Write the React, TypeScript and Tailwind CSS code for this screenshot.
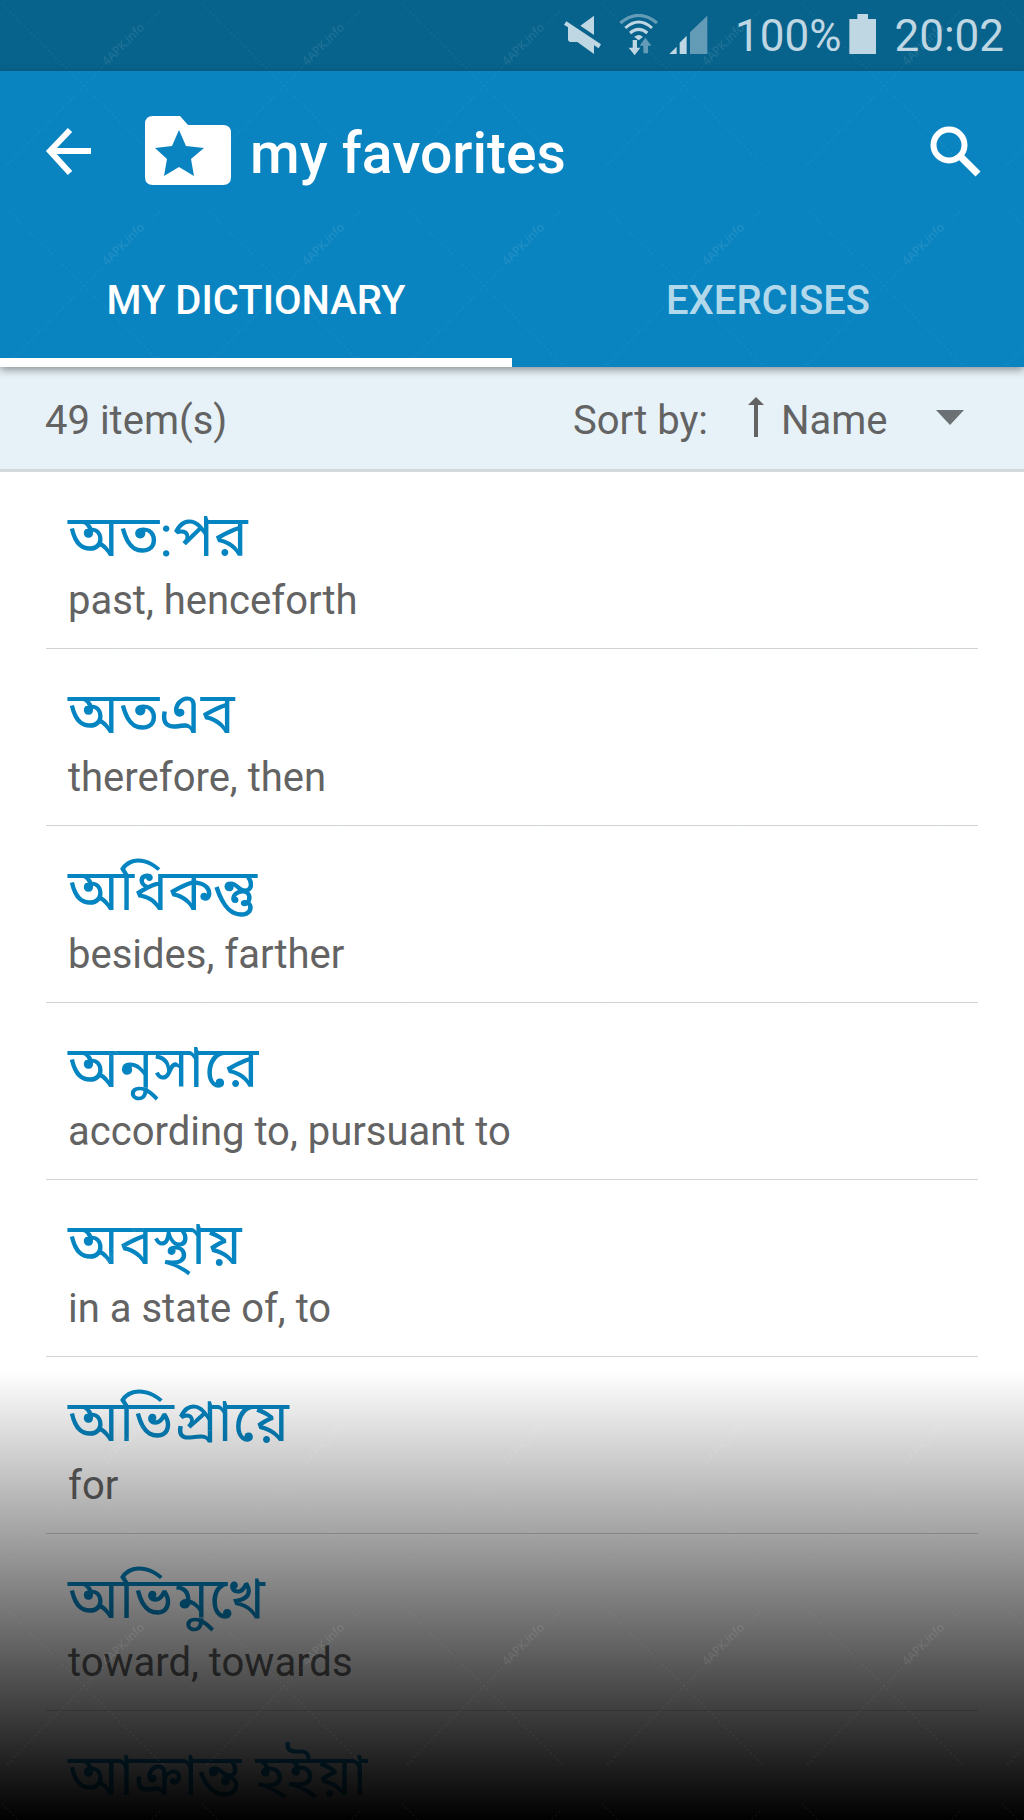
import React, { useState } from 'react'

const words = [
  { id: 1, word: 'অত:পর', translation: 'past, henceforth' },
  { id: 2, word: 'অতএব', translation: 'therefore, then' },
  { id: 3, word: 'অধিকন্তু', translation: 'besides, farther' },
  { id: 4, word: 'অনুসারে', translation: 'according to, pursuant to' },
  { id: 5, word: 'অবস্থায়', translation: 'in a state of, to' },
  { id: 6, word: 'অভিপ্রায়ে', translation: 'for' },
  { id: 7, word: 'অভিমুখে', translation: 'toward, towards' },
  { id: 8, word: 'আক্রান্ত হইয়া', translation: '' }
]

const StatusBar: React.FC = () => (
  <div className="flex h-[71px] shrink-0 items-center justify-end bg-[#08638c] pr-[20px] text-[44px] leading-none text-[#bfd6e3]">
    <svg viewBox="72 42 111 129" className="mr-[18px] h-[43px] w-[37px]" fill="currentColor">
      <path d="M162 47v58l-41-28z" />
      <path d="M79 64l104 69-7 12-14-9v26l-50-36H92q-8-1-8-9V82l-12-8z" />
    </svg>
    <svg viewBox="237 42 120 129" className="mr-[10px] h-[43px] w-[40px]">
      <g fill="none" stroke="currentColor" strokeWidth="9">
        <path d="M241 69q55-46 110 0" opacity="0.5" />
        <path d="M256 84q40-36 80 0" />
        <path d="M270 99q26-22 52 0" />
      </g>
      <path d="M283 111q13-12 26 0l-13 10z" fill="currentColor" />
      <path d="M278 120h13v23h10l-17 23-18-23h12z" fill="currentColor" />
      <path d="M310 160v-23h-11l17-24 18 24h-10v23z" fill="currentColor" opacity="0.5" />
    </svg>
    <svg viewBox="387 42 117 129" className="mr-[27px] h-[43px] w-[39px]" fill="currentColor">
      <path d="M388 162l22-22v22zM419 162v-34l21-21v55z" />
      <path d="M450 162V97l52-50v115z" opacity="0.5" />
    </svg>
    <span>100%</span>
    <svg viewBox="927 42 81 129" className="mr-[18px] ml-[8px] h-[43px] w-[27px]" fill="currentColor">
      <path d="M928 57h24V42h32v15h24v105h-80z" />
    </svg>
    <span>20:02</span>
  </div>
)

const Toolbar: React.FC = () => (
  <div className="flex h-[160px] items-center px-[40px]">
    <button type="button" aria-label="Back" className="mr-[48px]">
      <svg viewBox="0 0 57 57" className="h-[57px] w-[57px]" fill="none" stroke="#fff" strokeWidth="6">
        <path d="M51 28H10M30 7L10 28l20 22" />
      </svg>
    </button>
    <svg viewBox="0 0 86 70" className="mr-[19px] h-[70px] w-[86px]" fill="#fff">
      <path
        fillRule="evenodd"
        d="M8 0h27l8 9h35q8 0 8 8v44q0 8-8 8H8q-8 0-8-8V8q0-8 8-8zM34 14l-7 16-17 2 12 11-3 17 15-9 15 9-3-17 13-11-18-2z"
      />
    </svg>
    <h1 className="flex-1 pt-[6px] text-[57px] leading-[70px] font-medium text-white">my favorites</h1>
    <button type="button" aria-label="Search">
      <svg viewBox="0 0 57 57" className="h-[57px] w-[57px]" fill="none" stroke="#fff">
        <circle cx="22" cy="22" r="15.5" strokeWidth="6" />
        <path d="M34 34l17 17" strokeWidth="7" />
      </svg>
    </button>
  </div>
)

// faint diagonal lines with the site label, laid over the whole screen
const Watermark: React.FC = () => (
  <svg className="pointer-events-none absolute inset-0 z-20 h-full w-full" aria-hidden="true">
    <defs>
      <pattern id="mark" width="200" height="200" patternUnits="userSpaceOnUse">
        <g stroke="#f0f5f8" strokeOpacity="0.09" strokeDasharray="2 3">
          <path d="M2 4L165 167M7 165L103 67M148 23L162 10" />
        </g>
        <text
          x="124"
          y="48"
          transform="rotate(-45 124 45)"
          textAnchor="middle"
          fontSize="12"
          fontFamily="Open Sans, sans-serif"
          fill="#f0f5f8"
          fillOpacity="0.11"
        >
          4APK.info
        </text>
      </pattern>
    </defs>
    <rect width="100%" height="100%" fill="url(#mark)" />
  </svg>
)

const App: React.FC = () => {
  const [tab, setTab] = useState('dictionary')
  const [sort, setSort] = useState('name')

  const tabClass = (name: string) =>
    tab === name
      ? 'flex-1 border-b-[9px] border-white pt-[13px] text-white'
      : 'flex-1 border-b-[9px] border-transparent pt-[13px] text-white/70'

  return (
    <div className="relative flex h-screen flex-col overflow-hidden bg-white font-[Roboto,'Noto_Sans_Bengali',sans-serif]">
      <StatusBar />
      <header className="relative z-10 shrink-0 bg-[#0a84c0] shadow-[0_3px_8px_rgba(0,0,0,0.4)]">
        <Toolbar />
        <div role="tablist" className="flex h-[136px] text-[40px] font-medium">
          <button type="button" role="tab" aria-selected={tab === 'dictionary'} className={tabClass('dictionary')} onClick={() => setTab('dictionary')}>
            MY DICTIONARY
          </button>
          <button type="button" role="tab" aria-selected={tab === 'exercises'} className={tabClass('exercises')} onClick={() => setTab('exercises')}>
            EXERCISES
          </button>
        </div>
      </header>

      <div className="flex h-[105px] shrink-0 items-center border-b-[3px] border-[#d3d9dd] bg-[#e7f2f8] pt-[5px] pr-[46px] pl-[45px] text-[40px] text-[#636363]">
        <span className="flex-1">49 item(s)</span>
        <label htmlFor="sort" className="mr-[40px]">Sort by:</label>
        <svg viewBox="0 0 16 40" className="mr-[17px] mb-[8px] h-[40px] w-[16px]" fill="currentColor">
          <path d="M8 0l8 8h-6v32H6V8H0z" />
        </svg>
        <div className="relative">
          <select id="sort" value={sort} onChange={(e) => setSort(e.target.value)} className="w-[197px] appearance-none bg-transparent">
            <option value="name">Name</option>
            <option value="date">Date</option>
          </select>
          <svg viewBox="0 0 28 15" className="pointer-events-none absolute top-[19px] right-[14px] h-[15px] w-[28px]" fill="#6a7073">
            <path d="M0 0h28L14 15z" />
          </svg>
        </div>
      </div>

      <ul className="min-h-0 flex-1 overflow-hidden px-[46px]">
        {words.map((item) => (
          <li key={item.id} className="h-[177px] border-b border-[#cfd3d8] px-[22px] pt-[29px]">
            <p className="text-[57px] leading-[72px] text-[#0484c0]">{item.word}</p>
            <p className="text-[40px] leading-[56px] text-[#636363]">{item.translation}</p>
          </li>
        ))}
      </ul>

      <div className="pointer-events-none absolute inset-x-0 bottom-0 h-[449px] bg-linear-to-b from-transparent to-black" />
      <Watermark />
    </div>
  )
}

export default App
